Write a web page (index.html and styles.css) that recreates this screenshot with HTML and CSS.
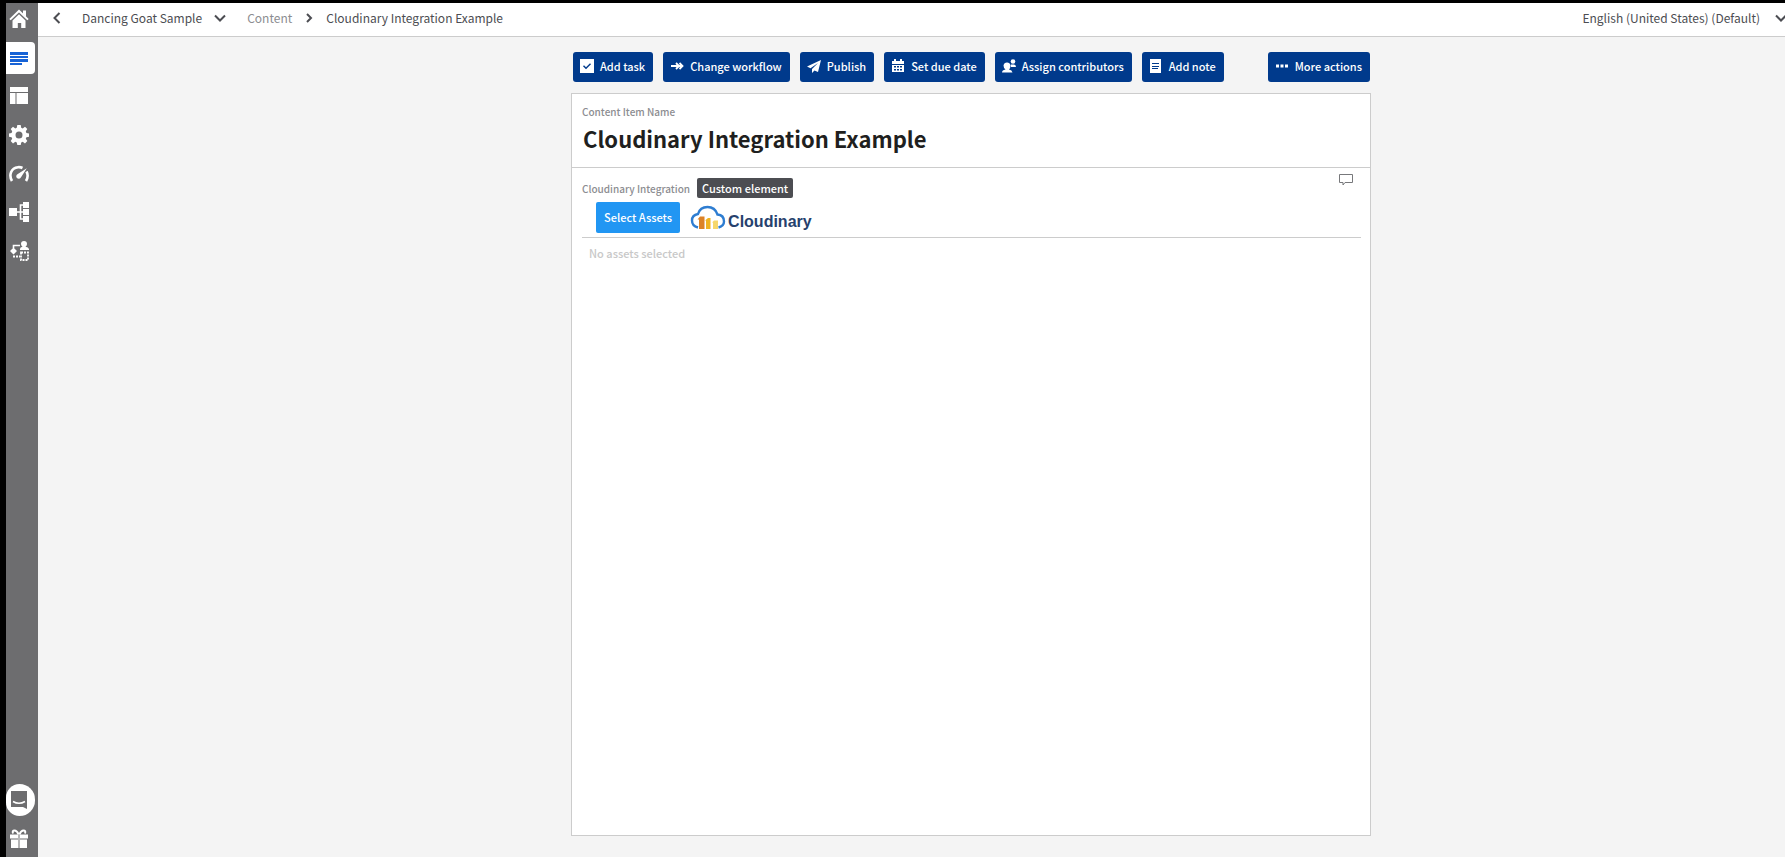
FILE: index.html
```html
<!DOCTYPE html>
<html lang="en">
<head>
<meta charset="utf-8">
<title>Cloudinary Integration Example</title>
<link rel="stylesheet" href="styles.css">
</head>
<body>
<div class="app">
  <nav class="sidebar" aria-label="Main">
    <div class="side-group side-top">
      <a class="side-link" href="#" aria-label="Home"><svg viewBox="0 0 20 20"><path d="M1 10.600 10 2l9 8.600" fill="none" stroke="currentColor" stroke-width="2"/><path d="M14 1.500h3V8l-3-3zM10 5.200l6.500 6.200V19h-4.300v-5H8.800v5H3.500v-7.600z"/></svg></a>
      <a class="side-link active" href="#" aria-label="Content"><svg viewBox="0 0 20 20"><path d="M1 4h18v3H1zM1 8h18v2H1zM1 11h18v3H1zM1 15h12v2H1z"/></svg></a>
      <a class="side-link" href="#" aria-label="Content models"><svg viewBox="0 0 20 20"><path d="M1 1h18v5H1zM1 7h5.500v11H1zM7.500 7H19v11H7.500z"/></svg></a>
      <a class="side-link" href="#" aria-label="Settings"><svg viewBox="0 0 20 20"><path fill-rule="evenodd" d="M8.300 0h3.400l.5 2.700 1.500.7 2.300-1.600L18.300 4l-1.500 2.300.6 1.600 2.600.5v3.300l-2.600.5-.6 1.500 1.500 2.300-2.300 2.400-2.300-1.600-1.500.6-.5 2.600H8.300l-.5-2.600-1.500-.6L4 18.400 1.700 16l1.500-2.300-.6-1.500L0 11.700V8.400l2.600-.5.6-1.600L1.700 4 4 1.800l2.300 1.600 1.500-.7zM10 6.500a3.500 3.500 0 1 0 0 7 3.500 3.500 0 0 0 0-7z"/></svg></a>
      <a class="side-link" href="#" aria-label="Mission control"><svg viewBox="0 0 20 20"><path d="M3 17C-.5 11 2 4 9 3.200q2.500-.2 4.500.8M17.500 7.500Q20 12 17 17" fill="none" stroke="currentColor" stroke-width="2.600"/><path d="M17.800 4.200 12 13.300a2.500 2.500 0 1 1-3.200-3.400z"/></svg></a>
      <a class="side-link" href="#" aria-label="Sitemap"><svg viewBox="0 0 20 20"><path d="M0 6h8v8H0zM14 0h6v6h-6zM14 7h6v6h-6zM14 14h6v6h-6z"/><path d="M8 10h7M15 3h-3.500v14H15" fill="none" stroke="currentColor" stroke-width="1.600"/></svg></a>
      <a class="side-link" href="#" aria-label="Workflows"><svg viewBox="0 0 20 20"><path d="M4.500 6.500 8 10l-3.500 3.500L1 10zM11 8q0-2 2.500-2.300Q12 4.500 12 3a3 3 0 0 1 6 0q0 1.500-1.500 2.700Q19.500 6 20 8v1h-9z"/><path d="M4.500 7V4.500H11" fill="none" stroke="currentColor" stroke-width="1.600"/><path d="M4 15.500h7M12 11.500h7v7.500h-7z" fill="none" stroke="currentColor" stroke-width="1.800" stroke-dasharray="2 1"/></svg></a>
    </div>
    <div class="side-group side-bottom">
      <button class="side-link chat" aria-label="Open chat"><svg viewBox="0 0 20 20"><path d="M2 1h16v18l-4-2H2z"/><path d="M4 11.500q6 3.500 12 0" fill="none" stroke="#fff" stroke-width="1.500"/></svg></button>
      <button class="side-link" aria-label="What's new"><svg viewBox="0 0 20 20"><path d="M1 5.500h8v4H1zM11 5.500h8v4h-8zM2 10.500h7V19H2zM11 10.500h7V19h-7zM9.500 5.500h1V19h-1z"/><path d="M9.500 5.500Q8 1.500 5.500 1.500T4 4.500M10.500 5.500Q12 1.500 14.500 1.500T16 4.500" fill="none" stroke="currentColor" stroke-width="2"/></svg></button>
    </div>
  </nav>
  <div class="page">
    <header class="topbar">
      <button class="plain" aria-label="Back"><svg class="arrow" viewBox="0 0 14 14"><path d="M9.500 2 4.500 7l5 5"/></svg></button>
      <button class="plain project">Dancing Goat Sample<svg class="arrow" viewBox="0 0 14 14"><path d="m2 4.500 5 5 5-5"/></svg></button>
      <a class="crumb" href="#">Content</a>
      <svg class="arrow small" viewBox="0 0 14 14"><path d="m5 3 4 4-4 4"/></svg>
      <span class="current">Cloudinary Integration Example</span>
      <button class="plain language">English (United States) (Default)<svg class="arrow" viewBox="0 0 14 14"><path d="m2 4.500 5 5 5-5"/></svg></button>
    </header>
    <main class="main">
      <div class="column">
        <div class="actions">
          <button class="action"><svg viewBox="0 0 14 14"><path fill-rule="evenodd" d="M0 0h14v14H0zM4 6.300l-1 1L6 10.300l5-5-1-1-4 4z"/></svg>Add task</button>
          <button class="action"><svg viewBox="0 0 14 14"><path d="M1 7h11M6 4l3 3-3 3M9.500 4l3 3-3 3" fill="none" stroke="currentColor" stroke-width="1.800"/></svg>Change workflow</button>
          <button class="action"><svg viewBox="0 0 14 14"><path d="M14 1 0 7.500l3.500 1.800L11 4 5 10v4l2.500-2.500L11 13z"/></svg>Publish</button>
          <button class="action"><svg viewBox="0 0 14 14"><path fill-rule="evenodd" d="M1 2h2V0h2v2h4V0h2v2h2v3H1zM1 6h12v7H1zM3 7v1.500h2V7zm3 0v1.500h2V7zm3 0v1.500h2V7zM3 10v1.500h2V10zm3 0v1.500h2V10zm3 0v1.500h2V10z"/></svg>Set due date</button>
          <button class="action"><svg viewBox="0 0 14 14"><path d="M0 13.500q0-2.500 3.500-3Q1.500 9 1.500 6.500 2 3.500 5 3.500t3.500 3Q8.500 9 7 10.500q3 .5 3.500 3z"/><circle cx="11" cy="2.500" r="2.300"/><path d="M9 8q-.5-2 0-2.500h3q2 0 2 2.500z"/></svg>Assign contributors</button>
          <button class="action"><svg viewBox="0 0 14 14"><path fill-rule="evenodd" d="M1 0h11v14H1zM3 4v1h7V4zm0 3v1h7V7zm0 2v1h6V9z"/></svg>Add note</button>
          <button class="action more"><svg viewBox="0 0 14 14"><path d="M1 5.500h3v3H1zM5.500 5.500h3v3h-3zM10 5.500h3v3h-3z"/></svg>More actions</button>
        </div>
        <article class="panel">
          <section class="name-section">
            <div class="label">Content Item Name</div>
            <h1 class="title">Cloudinary Integration Example</h1>
          </section>
          <section class="element">
            <div class="element-head">
              <span class="label">Cloudinary Integration</span>
              <span class="tag">Custom element</span>
              <button class="plain comment" aria-label="Add comment"><svg viewBox="0 0 14 12"><path d="M.5.500h13v8H6l-2 2.500V8.500H.5z" fill="none" stroke="#77787b"/></svg></button>
            </div>
            <div class="picker">
              <button class="select">Select Assets</button>
              <div class="brand"><svg viewBox="0 0 36 26"><path d="M8 22.500Q2 21 2 15.500 2 10 8 9 10 2 17.500 2 25 2 27.500 9.500 34 10 34 16.500q0 4.500-5.500 6" fill="none" stroke="#2e7dd1" stroke-width="2.400"/><path d="M7.500 14.500 10 11.500l4.500 0V24H9V14.500z" fill="#dc8227"/><path d="M15 15.500 18 13h2.500v11H16v-8.500z" fill="#efb322"/><path d="M22 17.500 24 15.500h4V24h-5v-6.500z" fill="#f5d76b"/></svg><span>Cloudinary</span></div>
            </div>
            <p class="empty">No assets selected</p>
          </section>
        </article>
      </div>
    </main>
  </div>
</div>
</body>
</html>
```
FILE: styles.css
```css
* { box-sizing: border-box; }
body {
  margin: 0;
  background: #f4f4f4;
  color: #4c4d52;
  font: 12px/18px "Noto Sans CJK SC", "Open Sans", sans-serif;
}
button { font: inherit; color: inherit; border: 0; padding: 0; background: none; cursor: pointer; }
a { color: inherit; text-decoration: none; }
svg { display: block; flex: none; fill: currentColor; }
.app {
  display: flex;
  min-height: 100vh;
  border-top: 3px solid #000;
  border-left: 6px solid #000;
}
.sidebar {
  flex: none;
  width: 32px;
  display: flex;
  flex-direction: column;
  justify-content: space-between;
  background: #6d6d6f;
  color: #fff;
}
.side-group { display: flex; flex-direction: column; gap: 7px; }
.side-top { height: 264px; gap: 0; justify-content: space-between; }
.side-bottom { padding-bottom: 2px; }
.side-link {
  width: 29px;
  height: 32px;
  display: flex;
  align-items: center;
  justify-content: flex-start;
  padding-left: 3px;
}
.side-link svg { width: 20px; height: 20px; }
.active { background: #fff; color: #1763d6; border-radius: 0 4px 4px 0; }
.chat { background: #fff; color: #6d6d6f; border-radius: 14px 16px 16px 14px; }
.page { flex: 1; min-width: 0; display: flex; flex-direction: column; }
.topbar {
  display: flex;
  align-items: center;
  height: 34px;
  padding: 0 0 4px 12px;
  background: #fff;
  border-bottom: 1px solid #ccc;
  white-space: nowrap;
}
.plain { display: flex; align-items: center; }
.arrow { width: 14px; height: 14px; fill: none; stroke: currentColor; stroke-width: 2; }
.project { margin-left: 18px; gap: 11px; }
.crumb { margin-left: 20px; color: #8c8d91; }
.small { margin: 0 10px; }
.language { margin-left: auto; margin-right: -3px; gap: 14px; }
.main { flex: 1; display: flex; justify-content: center; padding: 15px 0 21px 119px; }
.column { width: 800px; display: flex; flex-direction: column; }
.actions { display: flex; gap: 10px; padding: 0 1px 0 2px; margin-bottom: 11px; }
.action {
  height: 30px;
  display: flex;
  align-items: center;
  gap: 6px;
  padding: 0 8px 2px 7px;
  border-radius: 3px;
  background: #003a8c;
  color: #fff;
  font-size: 11px;
  font-weight: 500;
  white-space: nowrap;
}
.action svg { width: 14px; height: 14px; }
.more { margin-left: auto; }
.panel { flex: 1; background: #fff; border: 1px solid #ccc; }
.name-section { padding: 9px 11px 12px; border-bottom: 1px solid #ccc; }
.label { font-size: 10px; font-weight: 500; color: #8c8d91; }
.name-section .label { margin-left: -1px; }
.title { margin: 0; font-size: 22px; line-height: 34px; font-weight: 700; color: #1f1f20; }
.element { padding: 10px 9px 0 10px; }
.element-head { display: flex; align-items: flex-start; gap: 7px; }
.element-head .label { padding-top: 2px; }
.tag { padding: 0 5px; line-height: 20px; border-radius: 2px; background: #4c4d52; color: #fff; font-size: 11px; font-weight: 500; }
.comment { margin-left: auto; margin-right: 8px; margin-top: -4px; }
.comment svg { width: 14px; height: 12px; }
.picker { display: flex; gap: 10px; padding: 4px 0 4px 14px; border-bottom: 1px solid #ccc; }
.select { height: 31px; padding: 0 8px 1px; border-radius: 2px; background: #2196f3; color: #fff; font-size: 11px; font-weight: 500; }
.brand { display: flex; align-items: center; color: #26416d; font: bold 16px/20px "Liberation Sans", sans-serif; }
.brand svg { width: 36px; height: 26px; }
.brand span { padding: 9px 0 0 2px; }
.empty { margin: 6px 0 0 7px; color: #c8c8c8; font-size: 11px; font-weight: 500; }
```
